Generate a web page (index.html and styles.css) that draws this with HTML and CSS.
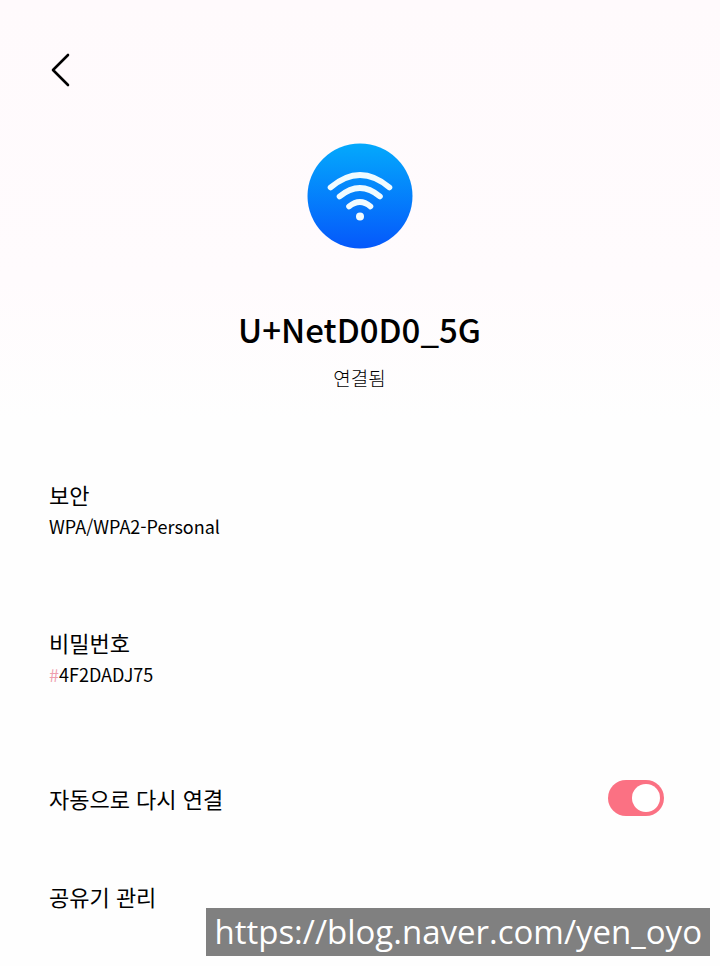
FILE: index.html
```
<!DOCTYPE html>
<html lang="ko">
<head>
  <meta charset="UTF-8">
  <meta name="viewport" content="width=device-width, initial-scale=1.0">
  <title>U+NetD0D0_5G</title>
  <link rel="stylesheet" href="styles.css">
</head>
<body>

  <header class="top-bar">
    <button type="button" class="back-button" aria-label="뒤로">
      <svg width="22" height="36" viewBox="0 0 22 36">
        <path d="M19 3 L4 18 L19 33" fill="none" stroke="#000" stroke-width="2.6" stroke-linecap="round" stroke-linejoin="round"/>
      </svg>
    </button>
  </header>

  <main>
    <section class="network">
      <svg class="wifi-icon" width="106" height="106" viewBox="0 0 106 106">
        <defs>
          <linearGradient id="wifi-blue" x1="0" y1="0" x2="0" y2="1">
            <stop offset="0" stop-color="#04a9fc"/>
            <stop offset="1" stop-color="#0558fb"/>
          </linearGradient>
        </defs>
        <circle cx="53" cy="53" r="52.5" fill="url(#wifi-blue)"/>
        <g fill="none" stroke="#f0fbff" stroke-width="5.6" stroke-linecap="round">
          <path d="M23.500 44.500 Q53 19.500 82.500 44.500"/>
          <path d="M32.500 53.500 Q53 36.500 73 53.500"/>
          <path d="M42 63.500 Q53 54.500 63.500 63.500"/>
        </g>
        <circle cx="53" cy="73.500" r="4" fill="#f0fbff"/>
      </svg>
      <h1>U+NetD0D0_5G</h1>
      <p>연결됨</p>
    </section>

    <dl class="details">
      <div class="detail">
        <dt>보안</dt>
        <dd>WPA/WPA2-Personal</dd>
      </div>
      <div class="detail">
        <dt>비밀번호</dt>
        <dd><span class="hash">#</span>4F2DADJ75</dd>
      </div>
    </dl>

    <div class="setting">
      <label for="reconnect">자동으로 다시 연결</label>
      <input type="checkbox" id="reconnect" class="switch" role="switch" checked>
    </div>
    <a href="#" class="router-link">공유기 관리</a>
  </main>

  <div class="watermark">https://blog.naver.com/yen_oyo</div>

</body>
</html>
```
FILE: styles.css
```
* {
  box-sizing: border-box;
}

body {
  margin: 0;
  padding: 52px 56px 48px 49px;
  min-height: 100vh;
  font-family: "Noto Sans CJK KR", sans-serif;
  color: #000;
  background: linear-gradient(#fffafc, #fffbfd 280px, #fefefe 420px);
}

.top-bar {
  display: flex;
}

.back-button {
  display: flex;
  padding: 0;
  border: none;
  background: none;
  cursor: pointer;
}

.network {
  display: flex;
  flex-direction: column;
  align-items: center;
  padding-top: 55px;
  padding-left: 6px;
}

.wifi-icon {
  display: block;
}

h1 {
  margin: 54px 0 0;
  font-size: 33px;
  line-height: 52px;
  font-weight: 500;
}

.network p {
  margin: 10px 0 0;
  font-size: 19px;
  line-height: 26px;
  font-weight: 300;
}

.details {
  margin: 85px 0 0;
}

.detail {
  margin-bottom: 84px;
}

dt,
.setting,
.router-link {
  font-size: 22px;
  line-height: 36px;
  font-weight: 400;
}

dd {
  margin: 0;
  font-size: 18px;
  line-height: 28px;
  font-weight: 400;
}

.hash {
  color: #ee9eae;
}

.setting {
  display: flex;
  align-items: center;
  justify-content: space-between;
  margin-top: 92px;
}

.switch {
  appearance: none;
  display: flex;
  justify-content: flex-end;
  width: 56px;
  height: 36px;
  margin: 0;
  padding: 4px;
  border-radius: 18px;
  background: #fb7183;
  cursor: pointer;
}

.switch::before {
  content: "";
  width: 28px;
  height: 28px;
  border-radius: 50%;
  background: #fff;
}

.switch:not(:checked) {
  justify-content: flex-start;
  background: #bbb;
}

.router-link {
  display: block;
  margin-top: 62px;
  color: inherit;
  text-decoration: none;
}

.watermark {
  position: fixed;
  right: 10px;
  bottom: 10px;
  padding: 0 8px;
  font-family: "Open Sans", sans-serif;
  font-size: 33px;
  line-height: 48px;
  color: #fff;
  background: #808080;
}
```
